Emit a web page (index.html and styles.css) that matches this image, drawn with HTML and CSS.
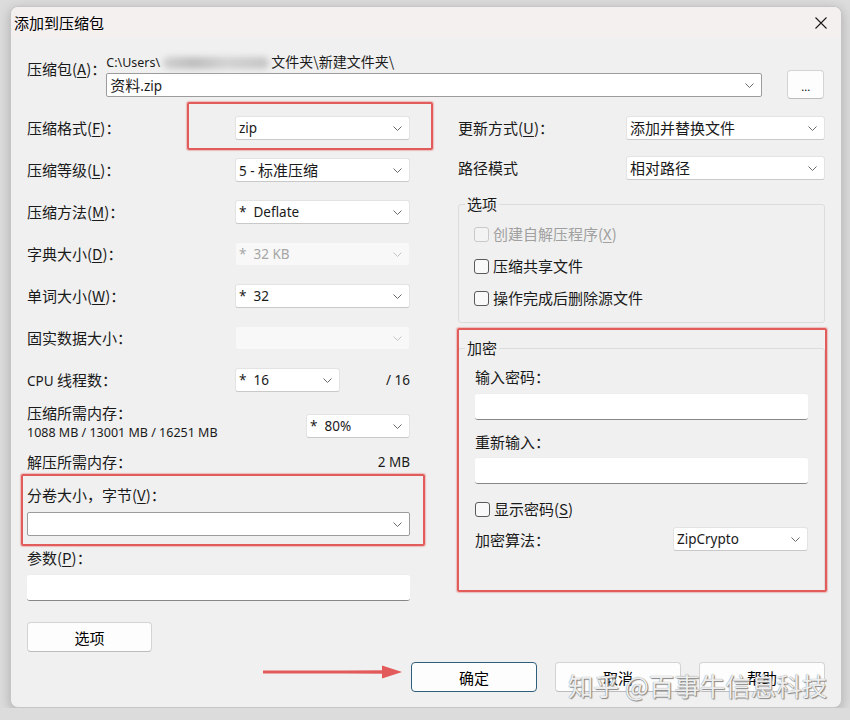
FILE: index.html
```html
<!DOCTYPE html>
<html lang="zh-CN">
<head>
    <meta charset="UTF-8">
    <title>添加到压缩包</title>
    <link rel="stylesheet" href="styles.css">
</head>
<body>
    <div class="dialog">
        <div class="titlebar">
            <span class="title">添加到压缩包</span>
            <svg class="closeIcon" width="12" height="12" viewBox="0 0 12 12">
                <path d="M0.5 0.5 L11.5 11.5 M11.5 0.5 L0.5 11.5" stroke="#1a1a1a" stroke-width="1.1" fill="none"/>
            </svg>
        </div>

        <div class="content">
            <!-- archive name -->
            <div class="archiveRow">
                <div class="archiveLabel">压缩包(<u>A</u>)：</div>
                <div class="archiveField">
                    <div class="path"><span class="en">C:\Users\</span><span class="blurred"></span>文件夹\新建文件夹\</div>
                    <div class="combo edit archiveCombo">
                        <span>资料<span class="en">.zip</span></span>
                        <svg class="chev" width="9" height="5" viewBox="0 0 9 5"><polyline points="0.5,0.5 4.5,4.5 8.5,0.5"/></svg>
                    </div>
                </div>
                <button class="btn browseBtn"><span class="en">...</span></button>
            </div>

            <div class="main">
                <!-- left column -->
                <div class="leftCol">
                    <div class="optRow">
                        <span>压缩格式(<u>F</u>)：</span>
                        <div class="combo wide"><span class="en">zip</span><svg class="chev" width="9" height="5" viewBox="0 0 9 5"><polyline points="0.5,0.5 4.5,4.5 8.5,0.5"/></svg></div>
                    </div>
                    <div class="optRow">
                        <span>压缩等级(<u>L</u>)：</span>
                        <div class="combo wide"><span><span class="en">5 - </span>标准压缩</span><svg class="chev" width="9" height="5" viewBox="0 0 9 5"><polyline points="0.5,0.5 4.5,4.5 8.5,0.5"/></svg></div>
                    </div>
                    <div class="optRow">
                        <span>压缩方法(<u>M</u>)：</span>
                        <div class="combo wide"><span class="en">*&nbsp; Deflate</span><svg class="chev" width="9" height="5" viewBox="0 0 9 5"><polyline points="0.5,0.5 4.5,4.5 8.5,0.5"/></svg></div>
                    </div>
                    <div class="optRow">
                        <span>字典大小(<u>D</u>)：</span>
                        <div class="combo wide disabled"><span class="en">*&nbsp; 32 KB</span><svg class="chev" width="9" height="5" viewBox="0 0 9 5"><polyline points="0.5,0.5 4.5,4.5 8.5,0.5"/></svg></div>
                    </div>
                    <div class="optRow">
                        <span>单词大小(<u>W</u>)：</span>
                        <div class="combo wide"><span class="en">*&nbsp; 32</span><svg class="chev" width="9" height="5" viewBox="0 0 9 5"><polyline points="0.5,0.5 4.5,4.5 8.5,0.5"/></svg></div>
                    </div>
                    <div class="optRow">
                        <span>固实数据大小：</span>
                        <div class="combo wide disabled"><span></span><svg class="chev" width="9" height="5" viewBox="0 0 9 5"><polyline points="0.5,0.5 4.5,4.5 8.5,0.5"/></svg></div>
                    </div>
                    <div class="optRow cpuRow">
                        <span><span class="en">CPU</span> 线程数：</span>
                        <div class="combo"><span class="en">*&nbsp; 16</span><svg class="chev" width="9" height="5" viewBox="0 0 9 5"><polyline points="0.5,0.5 4.5,4.5 8.5,0.5"/></svg></div>
                        <span class="rightText en">/ 16</span>
                    </div>

                    <div class="memRow">
                        <div class="memText">
                            <div>压缩所需内存：</div>
                            <div class="en memNums">1088 MB / 13001 MB / 16251 MB</div>
                        </div>
                        <div class="combo memCombo"><span class="en">*&nbsp; 80%</span><svg class="chev" width="9" height="5" viewBox="0 0 9 5"><polyline points="0.5,0.5 4.5,4.5 8.5,0.5"/></svg></div>
                    </div>
                    <div class="decompRow">
                        <span>解压所需内存：</span>
                        <span class="en">2 MB</span>
                    </div>

                    <div class="volLabel">分卷大小，字节(<u>V</u>)：</div>
                    <div class="combo edit volCombo"><span></span><svg class="chev" width="9" height="5" viewBox="0 0 9 5"><polyline points="0.5,0.5 4.5,4.5 8.5,0.5"/></svg></div>

                    <div class="paramLabel">参数(<u>P</u>)：</div>
                    <input class="textbox paramBox" type="text">

                    <button class="btn optionsBtn">选项</button>
                </div>

                <!-- right column -->
                <div class="rightCol">
                    <div class="optRow">
                        <span>更新方式(<u>U</u>)：</span>
                        <div class="combo rwide"><span>添加并替换文件</span><svg class="chev" width="9" height="5" viewBox="0 0 9 5"><polyline points="0.5,0.5 4.5,4.5 8.5,0.5"/></svg></div>
                    </div>
                    <div class="optRow pathRow">
                        <span>路径模式</span>
                        <div class="combo rwide"><span>相对路径</span><svg class="chev" width="9" height="5" viewBox="0 0 9 5"><polyline points="0.5,0.5 4.5,4.5 8.5,0.5"/></svg></div>
                    </div>

                    <fieldset class="group optionsGroup">
                        <legend>选项</legend>
                        <label class="check disabled"><span class="box"></span>创建自解压程序(<u>X</u>)</label>
                        <label class="check"><span class="box"></span>压缩共享文件</label>
                        <label class="check"><span class="box"></span>操作完成后删除源文件</label>
                    </fieldset>

                    <fieldset class="group cryptGroup">
                        <legend>加密</legend>
                        <div class="fieldLabel">输入密码：</div>
                        <input class="textbox pwBox" type="password">
                        <div class="fieldLabel second">重新输入：</div>
                        <input class="textbox pwBox2" type="password">
                        <label class="check showPw"><span class="box"></span>显示密码(<u>S</u>)</label>
                        <div class="algoRow">
                            <span>加密算法：</span>
                            <div class="combo algoCombo"><span class="en">ZipCrypto</span><svg class="chev" width="9" height="5" viewBox="0 0 9 5"><polyline points="0.5,0.5 4.5,4.5 8.5,0.5"/></svg></div>
                        </div>
                    </fieldset>
                </div>
            </div>

            <div class="footer">
                <button class="btn dlgBtn default">确定</button>
                <button class="btn dlgBtn">取消</button>
                <button class="btn dlgBtn">帮助</button>
            </div>
        </div>

        <!-- red annotations drawn on top of the screenshot -->
        <div class="mark markFormat"></div>
        <div class="mark markVolume"></div>
        <div class="mark markCrypt"></div>
        <svg class="arrow" width="140" height="16" viewBox="0 0 140 16">
            <path d="M0 8 L122 6.6 L122 9.4 Z" fill="#e25a5a"/>
            <rect x="0" y="6.5" width="122" height="3" fill="#e25a5a"/>
            <polygon points="119,1.5 139,8 119,14.5" fill="#e25a5a"/>
        </svg>
        <div class="watermark">知乎 @百事牛信息科技</div>
    </div>
</body>
</html>
```

FILE: styles.css
```css
body {
    margin: 0;
    padding: 6px 0 0 10px;
    background-color: #dcdcdc;
    font-family: "Noto Sans CJK SC", "Noto Sans", sans-serif;
    font-size: 15px;
    color: #1a1a1a;
}

u {
    text-decoration-thickness: 1px;
    text-underline-offset: 2px;
}

/* latin runs: Segoe-like width */
.en {
    font-family: "Noto Sans", "Noto Sans CJK SC", sans-serif;
    font-size: 13.5px;
}

.dialog {
    position: relative;
    width: 832px;
    height: 702px;
    box-sizing: border-box;
    background-color: #f0f0f0;
    border: 1px solid #c6c6c6;
    border-radius: 8px;
    box-shadow: 0 3px 12px rgba(0, 0, 0, 0.22);
    overflow: hidden;
}

.titlebar {
    height: 31px;
    display: flex;
    align-items: center;
    justify-content: space-between;
    padding: 0 14px 0 3px;
    background-color: #f5f0f0;
}

.title {
    font-size: 15px;
    line-height: 20px;
    color: #000;
}

.content {
    padding: 14px 16px 0 16px;
}

/* archive row */
.archiveRow {
    display: flex;
    align-items: flex-start;
}

.archiveLabel {
    flex: 0 0 79px;
    margin-top: 8px;
    line-height: 18px;
    white-space: nowrap;
}

.archiveField {
    width: 656px;
}

.path {
    height: 18px;
    font-size: 14px;
    line-height: 18px;
    white-space: nowrap;
}

.path .en {
    font-size: 12.5px;
}

.blurred {
    display: inline-block;
    width: 106px;
    height: 12px;
    margin: 0 2px 0 3px;
    vertical-align: middle;
    background: linear-gradient(to right, #cfcfcf, #bdbdbd 30%, #d2d2d2 60%, #c4c4c4);
    border-radius: 6px;
    filter: blur(3px);
}

.archiveCombo {
    margin-top: 3px;
    padding-left: 6px;
}

.browseBtn {
    width: 37px;
    height: 29px;
    margin: 18px 0 -2px 25px;
    padding: 0;
}

.browseBtn .en {
    font-size: 11px;
}

/* combos */
.combo {
    display: flex;
    align-items: center;
    justify-content: space-between;
    height: 24px;
    box-sizing: border-box;
    background-color: #ffffff;
    border: 1px solid #e3e3e3;
    border-bottom-color: #c9c9c9;
    border-radius: 3px;
    padding: 0 7px 0 3px;
    line-height: 20px;
    white-space: nowrap;
}

.combo.edit {
    border: 1px solid #9c9c9c;
    border-radius: 2px;
}

.combo.disabled {
    background-color: #f8f8f8;
    border-color: #f0f0f0;
    color: #a6a6a6;
}

.combo.disabled .chev {
    stroke: #c4c4c4;
}

.chev {
    fill: none;
    stroke: #6a6a6a;
    stroke-width: 1;
    flex-shrink: 0;
}

.wide {
    width: 175px;
}

.rwide {
    width: 199px;
}

/* main two columns */
.main {
    display: grid;
    grid-template-columns: 383px 1fr;
    column-gap: 48px;
    margin-top: 19px;
}

.leftCol,
.rightCol {
    display: flex;
    flex-direction: column;
}

.optRow {
    display: flex;
    align-items: center;
    justify-content: space-between;
    height: 24px;
    line-height: 20px;
}

.optRow + .optRow {
    margin-top: 18px;
}

.cpuRow {
    display: grid;
    grid-template-columns: 208px 105px 1fr;
}

.rightText {
    text-align: right;
}

.memRow {
    display: flex;
    justify-content: space-between;
    align-items: flex-start;
    margin-top: 11px;
    line-height: 20px;
}

.memNums {
    font-size: 12.5px;
}

.memCombo {
    width: 104px;
    margin-top: 11px;
}

.decompRow {
    display: flex;
    justify-content: space-between;
    margin-top: 9px;
    line-height: 20px;
}

.volLabel {
    margin-top: 13px;
    line-height: 20px;
}

.volCombo {
    margin-top: 7px;
}

.paramLabel {
    margin-top: 12px;
    line-height: 20px;
}

.textbox {
    display: block;
    height: 27px;
    box-sizing: border-box;
    margin: 0;
    padding: 0 6px;
    background-color: #ffffff;
    border: none;
    border-top: 1px solid #ededed;
    border-bottom: 1px solid #878787;
    border-radius: 3px;
    font: inherit;
    outline: none;
}

.paramBox {
    width: 383px;
    margin-top: 6px;
}

.btn {
    font-family: inherit;
    font-size: 15px;
    color: #000;
    background-color: #fdfdfd;
    border: 1px solid #d3d3d3;
    border-bottom-color: #bcbcbc;
    border-radius: 4px;
    padding: 0;
}

.optionsBtn {
    width: 125px;
    height: 30px;
    margin-top: 21px;
}

/* right column */
.pathRow.optRow {
    margin-top: 16px;
}

.group {
    margin: 14px 0 0 0;
    padding: 10px 16px 14px 16px;
    border: 1px solid #dcdcdc;
    border-radius: 3px;
    min-width: 0;
}

.group legend {
    margin-left: -10px;
    padding: 0 2px;
    line-height: 20px;
}

.check {
    display: flex;
    align-items: center;
    height: 20px;
    line-height: 20px;
}

.check + .check {
    margin-top: 12px;
}

.check .box {
    width: 15px;
    height: 15px;
    box-sizing: border-box;
    margin: 0 4px 0 -1px;
    border: 1px solid #5a5a5a;
    border-radius: 3px;
    background-color: #f9f9f9;
}

.check.disabled {
    color: #a0a0a0;
}

.check.disabled .box {
    border-color: #c9c9c9;
    background-color: #f3f3f3;
}

.cryptGroup {
    margin-top: 15px;
    padding: 9px 16px 40px 16px;
}

.fieldLabel {
    line-height: 20px;
}

.fieldLabel.second {
    margin-top: 12px;
}

.pwBox {
    width: 100%;
    margin-top: 6px;
}

.pwBox2 {
    width: 100%;
    margin-top: 5px;
}

.showPw {
    margin-top: 15px;
}

.showPw .box {
    margin-left: 0;
}

.algoRow {
    display: flex;
    align-items: center;
    justify-content: space-between;
    height: 24px;
    margin-top: 8px;
}

.algoCombo {
    width: 135px;
}

/* bottom buttons */
.footer {
    display: flex;
    justify-content: flex-end;
    gap: 18px;
    margin-top: 10px;
}

.dlgBtn {
    width: 126px;
    height: 30px;
}

.dlgBtn.default {
    border: 1px solid #2f5f7c;
}

/* annotations */
.mark {
    position: absolute;
    border: 2px solid #e25c5c;
    border-radius: 2px;
    box-shadow: 0 0 1px 1px rgba(226, 92, 92, 0.35);
}

.markFormat {
    left: 176px;
    top: 95px;
    width: 242px;
    height: 44px;
}

.markVolume {
    left: 10px;
    top: 467px;
    width: 400px;
    height: 68px;
}

.markCrypt {
    left: 446px;
    top: 321px;
    width: 366px;
    height: 260px;
}

.arrow {
    position: absolute;
    left: 252px;
    top: 657px;
}

.watermark {
    position: absolute;
    left: 557px;
    top: 663px;
    font-size: 25.5px;
    line-height: 30px;
    color: rgba(255, 255, 255, 0.88);
    text-shadow: 0 0 1px #6e6e6e, 1px 1px 1px #8a8a8a;
    white-space: nowrap;
}
```
